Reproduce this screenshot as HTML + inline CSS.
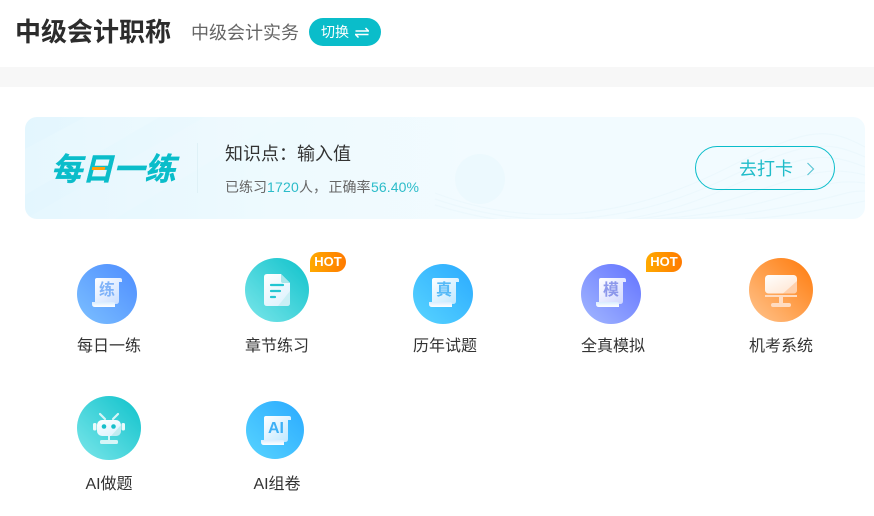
<!DOCTYPE html>
<html lang="zh"><head><meta charset="utf-8"><style>
*{box-sizing:border-box;margin:0;padding:0}
html,body{width:874px;height:516px;background:#fff;overflow:hidden}
body{position:relative;font-family:"Liberation Sans","Noto Sans CJK SC",sans-serif;color:#333}
.a{position:absolute;white-space:nowrap}
.lb{position:absolute;font-size:16px;line-height:22px;width:120px;text-align:center;color:#333}
.c{position:absolute;border-radius:50%;overflow:hidden}
.hot{position:absolute;width:36px;height:20px;border-radius:10px 10px 10px 0;background:linear-gradient(90deg,#ffaa00,#ff7a00);color:#fff;font:bold 13px/20px "Liberation Sans",sans-serif;text-align:center}
.g{font-size:16px;line-height:20px;font-weight:700;opacity:.85}
svg{display:block}
</style></head><body>
<svg width="0" height="0" style="position:absolute"><defs>
<linearGradient id="pb" x1="0" y1="0" x2="1" y2="1"><stop offset="0" stop-color="#fff"/><stop offset="1" stop-color="#c6dcff"/></linearGradient>
<linearGradient id="pc" x1="0" y1="0" x2="1" y2="1"><stop offset="0" stop-color="#fff"/><stop offset="1" stop-color="#bce6ff"/></linearGradient>
<linearGradient id="pv" x1="0" y1="0" x2="1" y2="1"><stop offset="0" stop-color="#fff"/><stop offset="1" stop-color="#cdd4ff"/></linearGradient>
<linearGradient id="pt" x1="0" y1="0" x2="0.6" y2="1"><stop offset="0" stop-color="#fff"/><stop offset="1" stop-color="#dff3fd"/></linearGradient>
<linearGradient id="po" x1="0" y1="0" x2="0.8" y2="1"><stop offset="0" stop-color="#fff"/><stop offset="1" stop-color="#ffe6d3"/></linearGradient>
<linearGradient id="bar" x1="0" y1="0" x2="0" y2="1"><stop offset="0" stop-color="#d9ecff"/><stop offset="1" stop-color="#fff"/></linearGradient>
</defs></svg>

<div class="a" style="left:15px;top:13px;font-size:26px;line-height:38px;font-weight:700;color:#2c2c2c">中级会计职称</div>
<div class="a" style="left:191px;top:20px;font-size:18px;line-height:26px;color:#666">中级会计实务</div>
<div class="a" style="left:309px;top:18px;width:72px;height:28px;border-radius:14px;background:#0abdca"></div>
<div class="a" style="left:321px;top:22px;font-size:14px;line-height:20px;color:#fff">切换</div>
<svg class="a" style="left:355px;top:27px" width="14" height="11" viewBox="0 0 14 11" fill="none" stroke="#fff" stroke-width="1.500"><path d="M0.500 4H13.500L10.500 1M13.500 7.500H0.500L3.500 10.500"/></svg>
<div class="a" style="left:0;top:67px;width:874px;height:20px;background:#f7f7f7"></div>

<div class="a" style="left:25px;top:117px;width:840px;height:102px;border-radius:12px;overflow:hidden;background:linear-gradient(90deg,#e3f6fe 0%,#eefafe 30%,#f2fbff 55%,#f2fbff 100%)">
<svg width="840" height="102" viewBox="0 0 840 102" fill="none">
<path d="M0 32L60 0H135L0 78Z" fill="#fff" opacity=".13"/>
<path d="M0 102L180 0H260L90 102Z" fill="#fff" opacity=".1"/>
<circle cx="455" cy="62" r="25" fill="#ecf9fe"/>
<g stroke="#ecf8fd" stroke-width="1.200">
<path d="M410 76C520 118 620 92 700 52S800 8 840 30"/>
<path d="M410 82C520 120 620 100 700 62S800 22 840 40"/>
<path d="M410 88C520 122 620 108 700 72S800 34 840 50"/>
<path d="M480 102C590 112 660 98 720 78S800 48 840 58"/>
<path d="M560 102C640 106 700 96 750 82S810 62 840 66"/>
<path d="M640 102C700 102 740 94 780 86S820 74 840 74"/>
<path d="M720 102C760 100 790 94 840 84"/>
</g></svg></div>
<div class="a" style="left:51px;top:150px;font-size:31px;line-height:40px;font-weight:700;font-style:italic;color:#0abdca;letter-spacing:.2px;-webkit-text-stroke:.5px #0abdca">每日一练</div>
<div class="a" style="left:92px;top:167px;width:13px;height:3px;background:#ff9f0a;transform:skewX(-12deg)"></div>
<div class="a" style="left:197px;top:143px;width:1px;height:50px;background:#dff1f7"></div>
<div class="a" style="left:225px;top:141px;font-size:18px;line-height:26px;color:#333">知识点：输入值</div>
<div class="a" style="left:225px;top:177px;font-size:14px;line-height:20px;color:#666">已练习<span style="color:#2cbcc9;letter-spacing:.2px">1720</span>人，<span style="margin-left:1.500px">正确率</span><span style="color:#2cbcc9;margin-left:.5px;letter-spacing:.1px">56.40%</span></div>
<div class="a" style="left:695px;top:146px;width:140px;height:44px;border-radius:22px;border:1px solid #0abdca"></div>
<div class="a" style="left:739px;top:156px;font-size:18px;line-height:26px;color:#1fbcc9">去打卡</div>
<svg class="a" style="left:806px;top:162px" width="9" height="14" viewBox="0 0 9 14" fill="none" stroke="#5cc6d4" stroke-width="1.200"><path d="M1.500 1L7.500 7L1.500 13"/></svg>

<!-- 1 -->
<div class="c" style="left:77px;top:264px;width:60px;height:60px;background:linear-gradient(45deg,#7cc0ff,#4d8cff)"></div>
<svg class="a" style="left:91px;top:277px" width="32" height="32" viewBox="0 0 32 32"><path d="M6 1H29Q31 1 31 3V5H28V24Q28 27 25 27H4V3Q4 1 6 1Z" fill="url(#pb)"/><path d="M1 25H22Q24 25 24 27V30H4Q1 30 1 27Z" fill="url(#bar)"/></svg>
<div class="a g" style="left:99px;top:281px;color:#6da8f8">练</div>
<div class="lb" style="left:49px;top:336px">每日一练</div>

<!-- 2 -->
<div class="c" style="left:245px;top:258px;width:64px;height:64px;background:linear-gradient(45deg,#7be6ea,#0fc2cb)"></div>
<svg class="a" style="left:264px;top:274px" width="26" height="33" viewBox="0 0 26 33"><path d="M3 0H17L26 9V29Q26 32 23 32H3Q0 32 0 29V3Q0 0 3 0Z" fill="url(#pt)"/><path d="M17 0L26 9H19Q17 9 17 7Z" fill="#a8e6ea"/><path d="M26 17V29Q26 32 23 32H14Z" fill="#b6ebef" opacity=".55"/><path d="M7 11H19M7 17H16M7 23H11" stroke="#22c6d2" stroke-width="2.200" stroke-linecap="round"/></svg>
<div class="hot" style="left:310px;top:252px">HOT</div>
<div class="lb" style="left:217px;top:336px">章节练习</div>

<!-- 3 -->
<div class="c" style="left:413px;top:264px;width:60px;height:60px;background:linear-gradient(45deg,#58d4ff,#2aaaff)"></div>
<svg class="a" style="left:428px;top:277px" width="32" height="32" viewBox="0 0 32 32"><path d="M6 1H29Q31 1 31 3V5H28V24Q28 27 25 27H4V3Q4 1 6 1Z" fill="url(#pc)"/><path d="M1 25H22Q24 25 24 27V30H4Q1 30 1 27Z" fill="url(#bar)"/></svg>
<div class="a g" style="left:436px;top:281px;color:#3eb0f6">真</div>
<div class="lb" style="left:385px;top:336px">历年试题</div>

<!-- 4 -->
<div class="c" style="left:581px;top:264px;width:60px;height:60px;background:linear-gradient(45deg,#a3b8ff,#6272ff)"></div>
<svg class="a" style="left:595px;top:277px" width="32" height="32" viewBox="0 0 32 32"><path d="M6 1H29Q31 1 31 3V5H28V24Q28 27 25 27H4V3Q4 1 6 1Z" fill="url(#pv)"/><path d="M1 25H22Q24 25 24 27V30H4Q1 30 1 27Z" fill="url(#bar)"/></svg>
<div class="a g" style="left:603px;top:281px;color:#7c89e8">模</div>
<div class="hot" style="left:646px;top:252px">HOT</div>
<div class="lb" style="left:553px;top:336px">全真模拟</div>

<!-- 5 -->
<div class="c" style="left:749px;top:258px;width:64px;height:64px;background:linear-gradient(45deg,#ffc48e,#ff7a0a)"></div>
<svg class="a" style="left:764px;top:274px" width="34" height="34" viewBox="0 0 34 34"><rect x="1" y="1" width="32" height="18.500" rx="3.500" fill="url(#po)"/><path d="M33 7V16Q33 19.500 30 19.500H19Z" fill="#ffc9a0" opacity=".8"/><rect x="1" y="21" width="32" height="2" fill="#ffdcc2"/><rect x="15" y="23" width="4" height="6" fill="#ffdcc2"/><rect x="7" y="29" width="20" height="4" rx="2" fill="#ffdcc2"/></svg>
<div class="lb" style="left:721px;top:336px">机考系统</div>

<!-- 6 -->
<div class="c" style="left:77px;top:396px;width:64px;height:64px;background:linear-gradient(45deg,#7be6ea,#0fc2cb)"></div>
<svg class="a" style="left:92px;top:412px" width="34" height="34" viewBox="0 0 34 34"><path d="M8 2L13 7M26 2L21 7" stroke="#d6f5f7" stroke-width="2.200" stroke-linecap="round"/><rect x="1" y="11" width="3.500" height="7.500" rx="1.500" fill="#eafafb"/><rect x="29.500" y="11" width="3.500" height="7.500" rx="1.500" fill="#eafafb"/><rect x="5" y="8" width="24" height="16" rx="5" fill="url(#pt)"/><path d="M29 13V19Q29 24 24 24H19Z" fill="#a8e6ea" opacity=".6"/><circle cx="12" cy="14.500" r="2.300" fill="#17bfca"/><circle cx="21.500" cy="14.500" r="2.300" fill="#17bfca"/><rect x="16" y="24" width="2" height="4" fill="#d6f5f7"/><rect x="8" y="28" width="18" height="4" rx="1.500" fill="#d6f5f7"/></svg>
<div class="lb" style="left:49px;top:474px">AI做题</div>

<!-- 7 -->
<div class="c" style="left:246px;top:401px;width:58px;height:58px;background:linear-gradient(45deg,#58d4ff,#2aaaff)"></div>
<svg class="a" style="left:260px;top:414px" width="32" height="32" viewBox="0 0 32 32"><path d="M6 2H29Q31 2 31 4V6H28V25Q28 28 25 28H4V4Q4 2 6 2Z" fill="url(#pc)"/><path d="M1 26H22Q24 26 24 28V31H4Q1 31 1 28Z" fill="url(#bar)"/></svg>
<div class="a" style="left:268px;top:419px;font:bold 16px/20px 'Liberation Sans',sans-serif;color:#3eb0f6">AI</div>
<div class="lb" style="left:217px;top:474px">AI组卷</div>
</body></html>
